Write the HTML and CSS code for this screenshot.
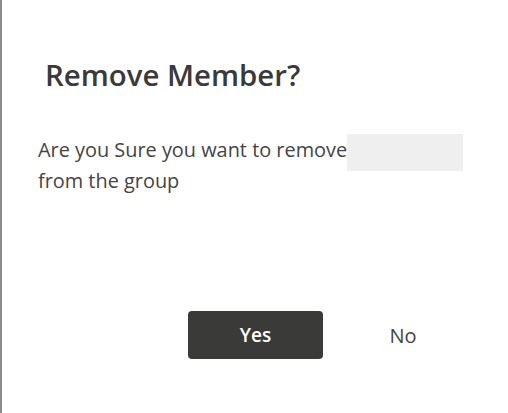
FILE: index.html
```html
<!DOCTYPE html>
<html>
<head>
<meta charset="utf-8">
<link rel="stylesheet" href="styles.css">
</head>
<body>
<div class="dialog">
  <h1 class="title">Remove Member?</h1>
  <p class="message">Are you Sure you want to remove<span class="name"></span><br>from the group</p>
  <div class="actions">
    <button class="btn btn-yes">Yes</button>
    <button class="btn btn-no">No</button>
  </div>
</div>
</body>
</html>
```
FILE: styles.css
```css
html, body {
  margin: 0;
  padding: 0;
  height: 100%;
  background: #ffffff;
}
.dialog {
  box-sizing: border-box;
  height: 100%;
  border-left: 2px solid #8a8a8a;
  padding: 55px 0 0 36px;
  font-family: "Open Sans", "Noto Sans", sans-serif;
  color: #3b3b3b;
}
.title {
  margin: 0 0 0 7px;
  font-size: 29.4px;
  font-weight: 600;
  line-height: 40px;
  color: #3a3a3a;
}
.message {
  margin: 39px 0 0 0;
  font-size: 19.9px;
  line-height: 31px;
  color: #444444;
}
.name {
  padding: 2px 0 8px 116px;
  background: #efefef;
}
.actions {
  display: flex;
  align-items: center;
  margin: 115px 0 0 150px;
}
.btn {
  font-family: "Open Sans", "Noto Sans", sans-serif;
  border: none;
  cursor: pointer;
  font-size: 19px;
}
.btn-yes {
  width: 135px;
  height: 48px;
  border-radius: 4px;
  background: #3a3b38;
  color: #ffffff;
  font-weight: 600;
}
.btn-no {
  width: 160px;
  height: 48px;
  background: transparent;
  color: #444444;
  font-weight: 400;
  font-size: 20px;
}
```
